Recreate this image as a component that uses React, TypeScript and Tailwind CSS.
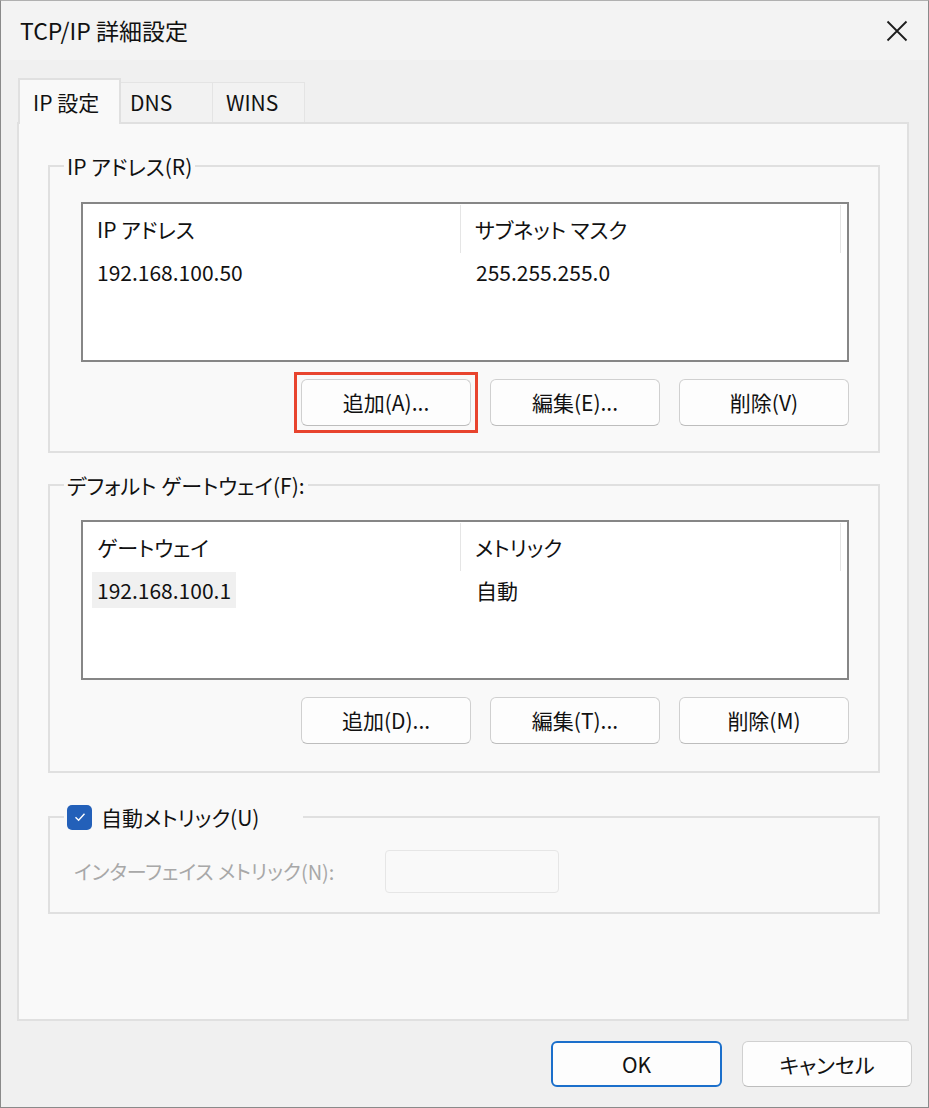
import React from 'react'

// ============================================================================
// TCP/IP 詳細設定 dialog (IP 設定 tab)
// ============================================================================

const FONT = "font-['Noto_Sans_CJK_JP',sans-serif] [font-feature-settings:'palt']"

interface Column {
  header: string
  value: string
  selected?: boolean
}

function ListView({ columns }: { columns: Column[] }) {
  return (
    <div className="h-[160px] border-2 border-[#868686] bg-white">
      <div className="flex h-[50px] items-center">
        <div className="flex h-[48px] w-[378px] items-center border-r border-[#e5e5e5] pl-[14px]">
          {columns[0].header}
        </div>
        <div className="flex h-[48px] w-[380px] items-center border-r border-[#e5e5e5] pl-[14px]">
          {columns[1].header}
        </div>
      </div>
      <div className="flex h-[36px] items-center">
        <div className="flex w-[379px] items-center pl-[9px]">
          <span className={`flex h-[36px] items-center px-[5px] ${columns[0].selected ? 'bg-[#f0f0f0]' : ''}`}>
            {columns[0].value}
          </span>
        </div>
        <div className="pl-[14px]">{columns[1].value}</div>
      </div>
    </div>
  )
}

function DialogButton({ label }: { label: string }) {
  return (
    <button
      type="button"
      className="flex h-[47px] w-[170px] items-center justify-center rounded-[6px] border border-[#d0d0d0] border-b-[#bdbdbd] bg-[#fdfdfd] text-[21px] text-[#111111]"
    >
      {label}
    </button>
  )
}

function GroupBox({
  legend,
  children,
  className = '',
}: {
  legend: React.ReactNode
  children: React.ReactNode
  className?: string
}) {
  return (
    <fieldset className={`ml-[29px] mr-[27px] border-2 border-[#e0e0e0] ${className}`}>
      <legend className="ml-[14px] flex h-[28px] items-center px-[3px]">{legend}</legend>
      {children}
    </fieldset>
  )
}

export default function App() {
  return (
    <div
      className={`${FONT} flex h-[1108px] w-[929px] flex-col border border-[#8a8a8a] border-t-[#b0b0b0] bg-[#f0f0f0] text-[21px] leading-none text-[#111111]`}
    >
      {/* Title bar */}
      <div className="flex h-[59px] shrink-0 items-center justify-between bg-[#f3f3f3] pl-[19px] pr-[19px]">
        <span className="text-[23px]">TCP/IP 詳細設定</span>
        <svg width="22" height="22" viewBox="0 0 22 22" className="mr-[1px]">
          <path d="M1.5 1.5 L20.5 20.5 M20.5 1.5 L1.5 20.5" stroke="#1c1c1c" strokeWidth="1.8" fill="none" />
        </svg>
      </div>

      <div className="flex flex-col px-[16px]">
        {/* Tabs */}
        <div className="relative z-10 mt-[18px] -mb-[2px] flex items-end pl-[1px]">
          <div className="flex h-[46px] w-[103px] items-start border-2 border-b-0 border-[#e0e0e0] bg-[#f9f9f9] pl-[13px] pt-[12px]">
            IP 設定
          </div>
          <div className="mb-[2px] flex h-[40px] w-[92px] items-center border border-l-0 border-b-0 border-[#e4e4e4] bg-[#f2f2f2] pl-[9px]">
            DNS
          </div>
          <div className="mb-[2px] flex h-[40px] w-[92px] items-center border border-l-0 border-b-0 border-[#e4e4e4] bg-[#f2f2f2] pl-[13px]">
            WINS
          </div>
        </div>

        {/* Tab panel */}
        <div className="flex h-[899px] w-[892px] flex-col border-2 border-[#e0e0e0] bg-[#f9f9f9]">
          <GroupBox legend="IP アドレス(R)" className="mt-[28px]">
            <div className="pl-[31px] pr-[29px] pt-[22px] pb-[25px]">
              <ListView
                columns={[
                  { header: 'IP アドレス', value: '192.168.100.50' },
                  { header: 'サブネット マスク', value: '255.255.255.0' },
                ]}
              />
              <div className="mt-[17px] flex justify-end gap-[19px]">
                <div className="-m-[7px] border-[3px] border-[#e8442e] p-[4px]">
                  <DialogButton label="追加(A)..." />
                </div>
                <DialogButton label="編集(E)..." />
                <DialogButton label="削除(V)" />
              </div>
            </div>
          </GroupBox>

          <GroupBox legend="デフォルト ゲートウェイ(F):" className="mt-[18px]">
            <div className="pl-[31px] pr-[29px] pt-[21px] pb-[27px]">
              <ListView
                columns={[
                  { header: 'ゲートウェイ', value: '192.168.100.1', selected: true },
                  { header: 'メトリック', value: '自動' },
                ]}
              />
              <div className="mt-[17px] flex justify-end gap-[19px]">
                <DialogButton label="追加(D)..." />
                <DialogButton label="編集(T)..." />
                <DialogButton label="削除(M)" />
              </div>
            </div>
          </GroupBox>

          <GroupBox
            className="mt-[30px]"
            legend={
              <span className="flex items-center pr-[41px]">
                <span className="flex h-[25px] w-[25px] items-center justify-center rounded-[5px] bg-[#2360b9]">
                  <svg width="14" height="14" viewBox="0 0 14 14">
                    <path d="M2.5 7.3 L5.6 10.2 L11.5 3.8" stroke="#ffffff" strokeWidth="1.4" fill="none" />
                  </svg>
                </span>
                <span className="ml-[9px]">自動メトリック(U)</span>
              </span>
            }
          >
            <div className="flex items-center pl-[24px] pt-[19px] pb-[19px]">
              <span className="w-[311px] text-[20px] text-[#a8a8a8]">インターフェイス メトリック(N):</span>
              <div className="h-[43px] w-[174px] rounded-[4px] border border-[#e6e6e6] bg-[#f9f9f9]" />
            </div>
          </GroupBox>
        </div>

        {/* Dialog buttons */}
        <div className="mt-[20px] flex justify-end gap-[20px]">
          <button
            type="button"
            className="flex h-[46px] w-[171px] items-center justify-center rounded-[6px] border-2 border-[#1b6fcb] bg-[#fdfdfd] text-[21px]"
          >
            OK
          </button>
          <button
            type="button"
            className="flex h-[46px] w-[170px] items-center justify-center rounded-[6px] border border-[#d0d0d0] border-b-[#bdbdbd] bg-[#fdfdfd] text-[21px]"
          >
            キャンセル
          </button>
        </div>
      </div>
    </div>
  )
}
